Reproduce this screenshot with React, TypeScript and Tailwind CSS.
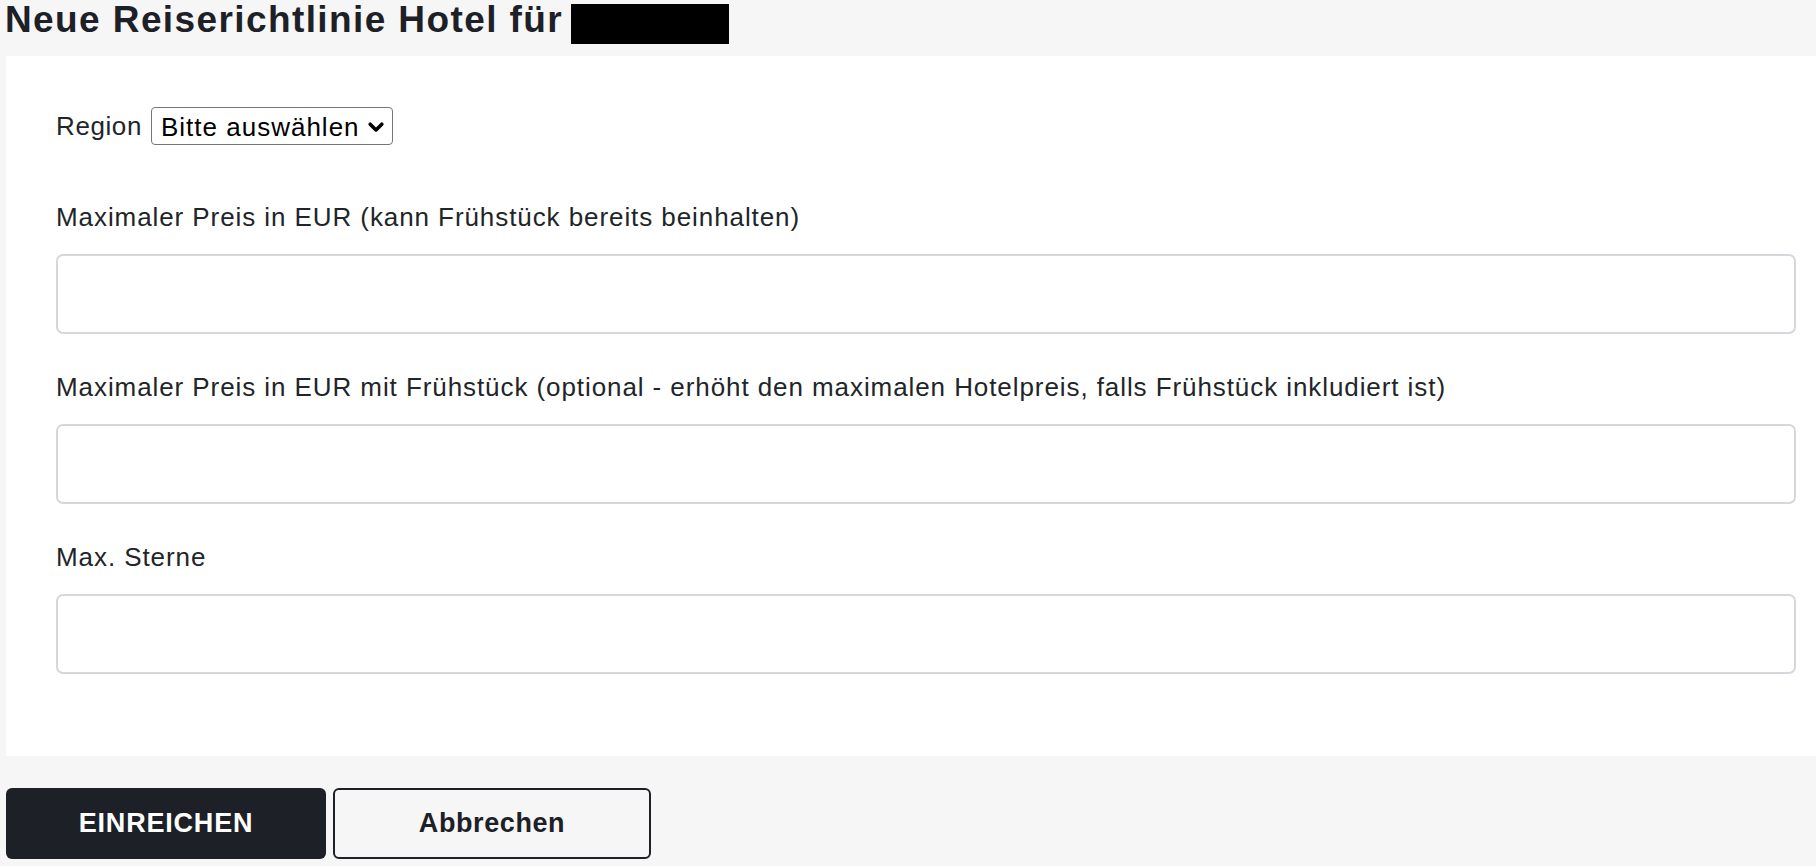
import React from 'react';

const fields = [
  'Maximaler Preis in EUR (kann Frühstück bereits beinhalten)',
  'Maximaler Preis in EUR mit Frühstück (optional - erhöht den maximalen Hotelpreis, falls Frühstück inkludiert ist)',
  'Max. Sterne',
];

const App: React.FC = () => {
  return (
    <div className="min-h-screen bg-[#f6f6f6] font-['Liberation_Sans',Arial,sans-serif] text-[#212529]">
      {/* Title with redacted company name */}
      <div className="flex h-[56px] items-start gap-[8px] pl-[5px]">
        <h1 className="text-[37px] font-bold leading-[40px] tracking-[1.4px] text-[#1d2127]">
          Neue Reiserichtlinie Hotel für
        </h1>
        <span className="mt-[4px] h-[40px] w-[158px] bg-black" />
      </div>

      {/* Form panel */}
      <div className="ml-[6px] bg-white pb-[82px] pl-[50px] pr-[20px] pt-[51px]">
        <div className="flex items-center gap-[9px]">
          <label className="text-[26px] leading-[30px] tracking-[0.6px]">Region</label>
          <div className="relative">
            <select className="block h-[38px] w-[242px] appearance-none rounded-[4px] border border-[#767676] bg-white pl-[9px] text-[26px] tracking-[1px] text-black outline-none">
              <option>Bitte auswählen</option>
            </select>
            <svg
              className="pointer-events-none absolute right-[9px] top-[15px]"
              width="16"
              height="11"
              viewBox="0 0 16 11"
              fill="none"
              stroke="black"
              strokeWidth="3.5"
              strokeLinecap="round"
              strokeLinejoin="round"
            >
              <path d="M2.2 2.2l5.8 5.8 5.8-5.8" />
            </svg>
          </div>
        </div>

        <div className="mt-[57px] flex flex-col gap-[38px]">
          {fields.map((f) => (
            <div key={f} className="flex flex-col">
              <label className="mb-[22px] block text-[26px] leading-[30px] tracking-[0.92px]">{f}</label>
              <input
                type="text"
                className="h-[80px] w-full rounded-[7px] border-2 border-[#d4d7db] bg-white px-4 text-[26px] outline-none"
              />
            </div>
          ))}
        </div>
      </div>

      {/* Actions */}
      <div className="mt-[32px] flex gap-[7px] pl-[6px]">
        <button className="h-[71px] w-[320px] rounded-[6px] bg-[#1d2027] text-[27px] font-bold tracking-[0.8px] text-white">
          EINREICHEN
        </button>
        <button className="h-[71px] w-[318px] rounded-[6px] border-2 border-[#1d2027] text-[27px] font-bold tracking-[0.6px] text-[#1d2027]">
          Abbrechen
        </button>
      </div>
    </div>
  );
};

export default App;
